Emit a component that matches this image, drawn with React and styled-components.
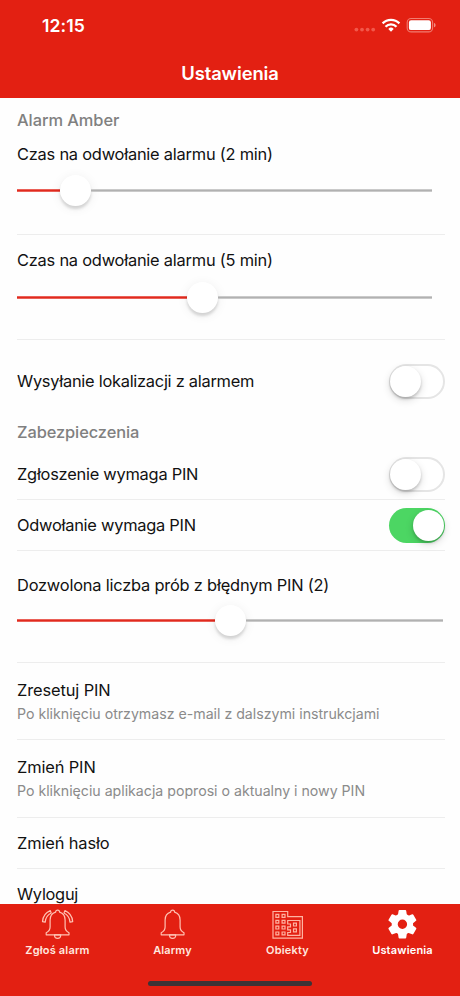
import React from "react";
import styled, { createGlobalStyle } from "styled-components";

const RED = "#e32012";

const GlobalStyle = createGlobalStyle`
  * { box-sizing: border-box; }
  body { margin: 0; background: #fff; font-family: Inter, "Noto Sans", sans-serif; }
`;

const Screen = styled.div`
  display: flex;
  flex-direction: column;
  width: 460px;
  height: 996px;
  overflow: hidden;
  background: #fefefe;
  color: #111;
`;

const Header = styled.header`
  flex: none;
  height: 98px;
  background: ${RED};
  color: #fff;
`;

const StatusBar = styled.div`
  display: flex;
  align-items: center;
  justify-content: space-between;
  height: 49px;
  padding: 2px 24px 0 42px;
`;

const Clock = styled.span`
  font-size: 17.6px;
  font-weight: 600;
  letter-spacing: 0.1px;
`;

const StatusIcons = styled.div`
  display: flex;
  align-items: center;
  svg { display: block; }
`;

const Title = styled.h1`
  margin: 0;
  font-size: 18.4px;
  line-height: 49px;
  font-weight: 600;
  text-align: center;
  letter-spacing: -0.1px;
`;

const Content = styled.main`
  flex: 1;
  min-height: 0;
  overflow: hidden;
  padding: 0 15px 0 17px;
`;

const SectionTitle = styled.h2`
  margin: 0;
  height: ${(p) => p.$height}px;
  line-height: ${(p) => p.$height + 2}px;
  color: #808080;
  font-size: 16.4px;
  font-weight: 450;
  letter-spacing: ${(p) => p.$spacing || 0}px;
`;

const Row = styled.section`
  height: ${(p) => p.$height}px;
  padding-top: ${(p) => p.$top || 0}px;
  border-bottom: 1px solid ${(p) => (p.$plain ? "transparent" : "#ededed")};
`;

const SwitchRow = styled(Row)`
  display: flex;
  align-items: ${(p) => (p.$top ? "flex-start" : "center")};
  justify-content: space-between;
`;

const Label = styled.div`
  font-size: 16.4px;
  line-height: 26px;
  white-space: nowrap;
  letter-spacing: ${(p) => p.$spacing ?? -0.22}px;
`;

const SwitchLabel = styled(Label)`
  line-height: 35px;
`;

const Hint = styled.div`
  color: #8b8b8b;
  font-size: 14.2px;
  line-height: 22px;
  white-space: nowrap;
  letter-spacing: -0.02px;
`;

const Slider = styled.div`
  display: flex;
  align-items: center;
  height: 31px;
  width: ${(p) => p.$width}px;
  margin-top: ${(p) => p.$gap}px;
`;

const Filled = styled.div`
  width: ${(p) => p.$width}px;
  height: 3px;
  background: #e02a1e;
  border: solid #ea6158;
  border-width: 1px 0;
`;

const Rest = styled.div`
  flex: 1;
  height: 3px;
  background: #b1b1b1;
  border: solid #cacaca;
  border-width: 1px 0;
`;

const Thumb = styled.div`
  width: 31px;
  height: 31px;
  border-radius: 50%;
  background: #fff;
  box-shadow: 0 3px 3px rgba(0, 0, 0, 0.14), 0 2px 12px rgba(0, 0, 0, 0.07);
`;

const Toggle = styled.div`
  display: flex;
  align-items: center;
  justify-content: ${(p) => (p.$on ? "flex-end" : "flex-start")};
  width: 56.5px;
  height: 35px;
  padding: 2px 1.5px;
  border-radius: 18px;
  background: ${(p) => (p.$on ? "#4cd663" : "#fff")};
  box-shadow: ${(p) => (p.$on ? "none" : "inset 0 0 0 2px #e5e5e5")};
`;

const Knob = styled.div`
  width: 31px;
  height: 31px;
  border-radius: 50%;
  background: #fff;
  box-shadow: 0 2px 3px rgba(0, 0, 0, 0.18), 0 3px 9px rgba(0, 0, 0, 0.14);
`;

const Footer = styled.footer`
  flex: none;
  height: 92.5px;
  background: ${RED};
  color: #fff;
`;

const Tabs = styled.nav`
  display: grid;
  grid-template-columns: repeat(4, 1fr);
  height: 77px;
`;

const Tab = styled.div`
  display: flex;
  flex-direction: column;
  align-items: center;
  padding-top: 4.5px;
  font-size: 11px;
  line-height: 16px;
  font-weight: 600;
  letter-spacing: ${(p) => p.$spacing ?? 0.18}px;
  color: ${(p) => (p.$active ? "#fff" : "#ffe7df")};
  svg { display: block; margin-bottom: 2px; overflow: visible; }
`;

const HomeIndicator = styled.div`
  width: 164px;
  height: 5.6px;
  margin: 0 auto;
  border-radius: 3px;
  background: #3c3336;
`;

const Bell = ({ ringing }) => (
  <svg width="32" height="32" viewBox="0 0 32 32" fill="none" stroke="#ffc2b3" strokeWidth="1.2" strokeLinejoin="round">
    <path d="M13.6 4.2a2 2 0 0 1 4 0c3.5 1 5.5 3.9 5.5 7.9v7c0 2.7 1 4.3 3.9 5.7v2H4.2v-2c2.9-1.4 3.9-3 3.9-5.7v-7c0-4 2-6.900 5.500-7.900Z" />
    <path d="M12.5 26.8h6.2v.5a3.1 3.1 0 0 1-6.2 0Z" />
    {ringing && (
      <>
        <path d="M8.2 2.6C3.7 4.5 .9 8.3.5 13.6l2.7.5C3.500 9.900 5.500 6.800 9.200 5Z" />
        <path d="M23 2.6c4.5 1.900 7.300 5.700 7.700 11l-2.700.5c-.3-4.200-2.300-7.300-6-9.100Z" />
      </>
    )}
  </svg>
);

const Building = () => (
  <svg width="32" height="32" viewBox="0 0 32 32" fill="none" stroke="#ffb3a2" strokeWidth="1.2">
    <path d="M1 3.5h14.7v5.2h14.7v21.5H1Z" />
    <path d="M15.7 12.5h12.2v14.8H15.7v-2.800h2.800v-2.700H15.700v-3h2.800v-2.800H15.700Z" />
    <path d="M3.900 6.400h2.900v2.900h-2.900zM10.100 6.400h2.900v2.900h-2.900zM3.900 12.300h2.900v2.900h-2.900zM10.100 12.300h2.900v2.900h-2.900zM3.900 18.100h2.900v2.900h-2.900zM10.100 18.100h2.900v2.900h-2.900zM3.900 24h2.900v2.900h-2.900zM10.100 24h2.900v2.900h-2.900zM21.500 15.100h2.900v2.900h-2.900zM21.500 20.900h2.900v2.900h-2.900z" />
  </svg>
);

const Gear = () => (
  <svg width="32" height="32" viewBox="0 0 32 32">
    <g transform="translate(15.4 16.3)" fill="#fff">
      <circle r="7.7" fill="none" stroke="#fff" strokeWidth="6" />
      {[0, 60, 120, 180, 240, 300].map((angle) => (
        <path
          key={angle}
          transform={`rotate(${angle})`}
          d="M-2.9-14.3h5.8a.9.9 0 0 1 .9.8l.7 4.5-1 2h-7l-1-2 .7-4.5a.9.9 0 0 1 .9-.8Z"
        />
      ))}
    </g>
  </svg>
);

const StatusGlyphs = () => (
  <svg width="84" height="20" viewBox="0 0 84 20" fill="none">
    <g fill="#f2584b">
      <circle cx="4.4" cy="13.6" r="1.9" />
      <circle cx="10" cy="13.6" r="1.9" />
      <circle cx="15.6" cy="13.6" r="1.9" />
      <circle cx="21.2" cy="13.6" r="1.9" />
    </g>
    <g stroke="#fff" strokeWidth="2.3">
      <path d="M30.6 7.4a11.8 11.8 0 0 1 16.8 0" />
      <path d="M33.5 10.7a7.8 7.8 0 0 1 11 0" />
    </g>
    <path d="M39 15.7l-2.7-2.8a3.9 3.9 0 0 1 5.4 0Z" fill="#fff" />
    <rect x="55.2" y="2.5" width="25.4" height="13.4" rx="3.9" stroke="#f17c70" strokeWidth="1.1" />
    <rect x="56.9" y="4.3" width="22" height="9.8" rx="2.2" fill="#fff" />
    <path d="M82 7.1c2.1.7 2.1 3.5 0 4.2Z" fill="#f38d82" />
  </svg>
);

const RangeSlider = ({ filled, width, gap }) => (
  <Slider $width={width} $gap={gap}>
    <Filled $width={filled} />
    <Thumb />
    <Rest />
  </Slider>
);

const Switch = ({ on }) => (
  <Toggle $on={on}>
    <Knob />
  </Toggle>
);

export default function App() {
  return (
    <>
      <GlobalStyle />
      <Screen>
        <Header>
          <StatusBar>
            <Clock>12:15</Clock>
            <StatusIcons>
              <StatusGlyphs />
            </StatusIcons>
          </StatusBar>
          <Title>Ustawienia</Title>
        </Header>

        <Content>
          <SectionTitle $height={42} $spacing={-0.05}>Alarm Amber</SectionTitle>
          <Row $height={95} $top={1}>
            <Label>Czas na odwołanie alarmu (2 min)</Label>
            <RangeSlider filled={42.5} width={415} gap={8} />
          </Row>
          <Row $height={105} $top={12}>
            <Label>Czas na odwołanie alarmu (5 min)</Label>
            <RangeSlider filled={170} width={415} gap={9} />
          </Row>
          <SwitchRow $height={73} $top={24} $plain>
            <SwitchLabel $spacing={-0.26}>Wysyłanie lokalizacji z alarmem</SwitchLabel>
            <Switch />
          </SwitchRow>

          <SectionTitle $height={36} $spacing={-0.08}>Zabezpieczenia</SectionTitle>
          <SwitchRow $height={51}>
            <SwitchLabel $spacing={-0.24}>Zgłoszenie wymaga PIN</SwitchLabel>
            <Switch />
          </SwitchRow>
          <SwitchRow $height={51}>
            <SwitchLabel $spacing={-0.25}>Odwołanie wymaga PIN</SwitchLabel>
            <Switch on />
          </SwitchRow>
          <Row $height={112} $top={21}>
            <Label $spacing={-0.2}>Dozwolona liczba prób z błędnym PIN (2)</Label>
            <RangeSlider filled={198} width={426} gap={7} />
          </Row>
          <Row $height={77} $top={14}>
            <Label $spacing={-0.1}>Zresetuj PIN</Label>
            <Hint>Po kliknięciu otrzymasz e-mail z dalszymi instrukcjami</Hint>
          </Row>
          <Row $height={78} $top={14}>
            <Label $spacing={-0.12}>Zmień PIN</Label>
            <Hint>Po kliknięciu aplikacja poprosi o aktualny i nowy PIN</Hint>
          </Row>
          <Row $height={51} $top={12}>
            <Label $spacing={-0.12}>Zmień hasło</Label>
          </Row>
          <Row $height={51} $top={12}>
            <Label $spacing={-0.28}>Wyloguj</Label>
          </Row>
        </Content>

        <Footer>
          <Tabs>
            <Tab><Bell ringing />Zgłoś alarm</Tab>
            <Tab $spacing={0.1}><Bell />Alarmy</Tab>
            <Tab><Building />Obiekty</Tab>
            <Tab $active><Gear />Ustawienia</Tab>
          </Tabs>
          <HomeIndicator />
        </Footer>
      </Screen>
    </>
  );
}
